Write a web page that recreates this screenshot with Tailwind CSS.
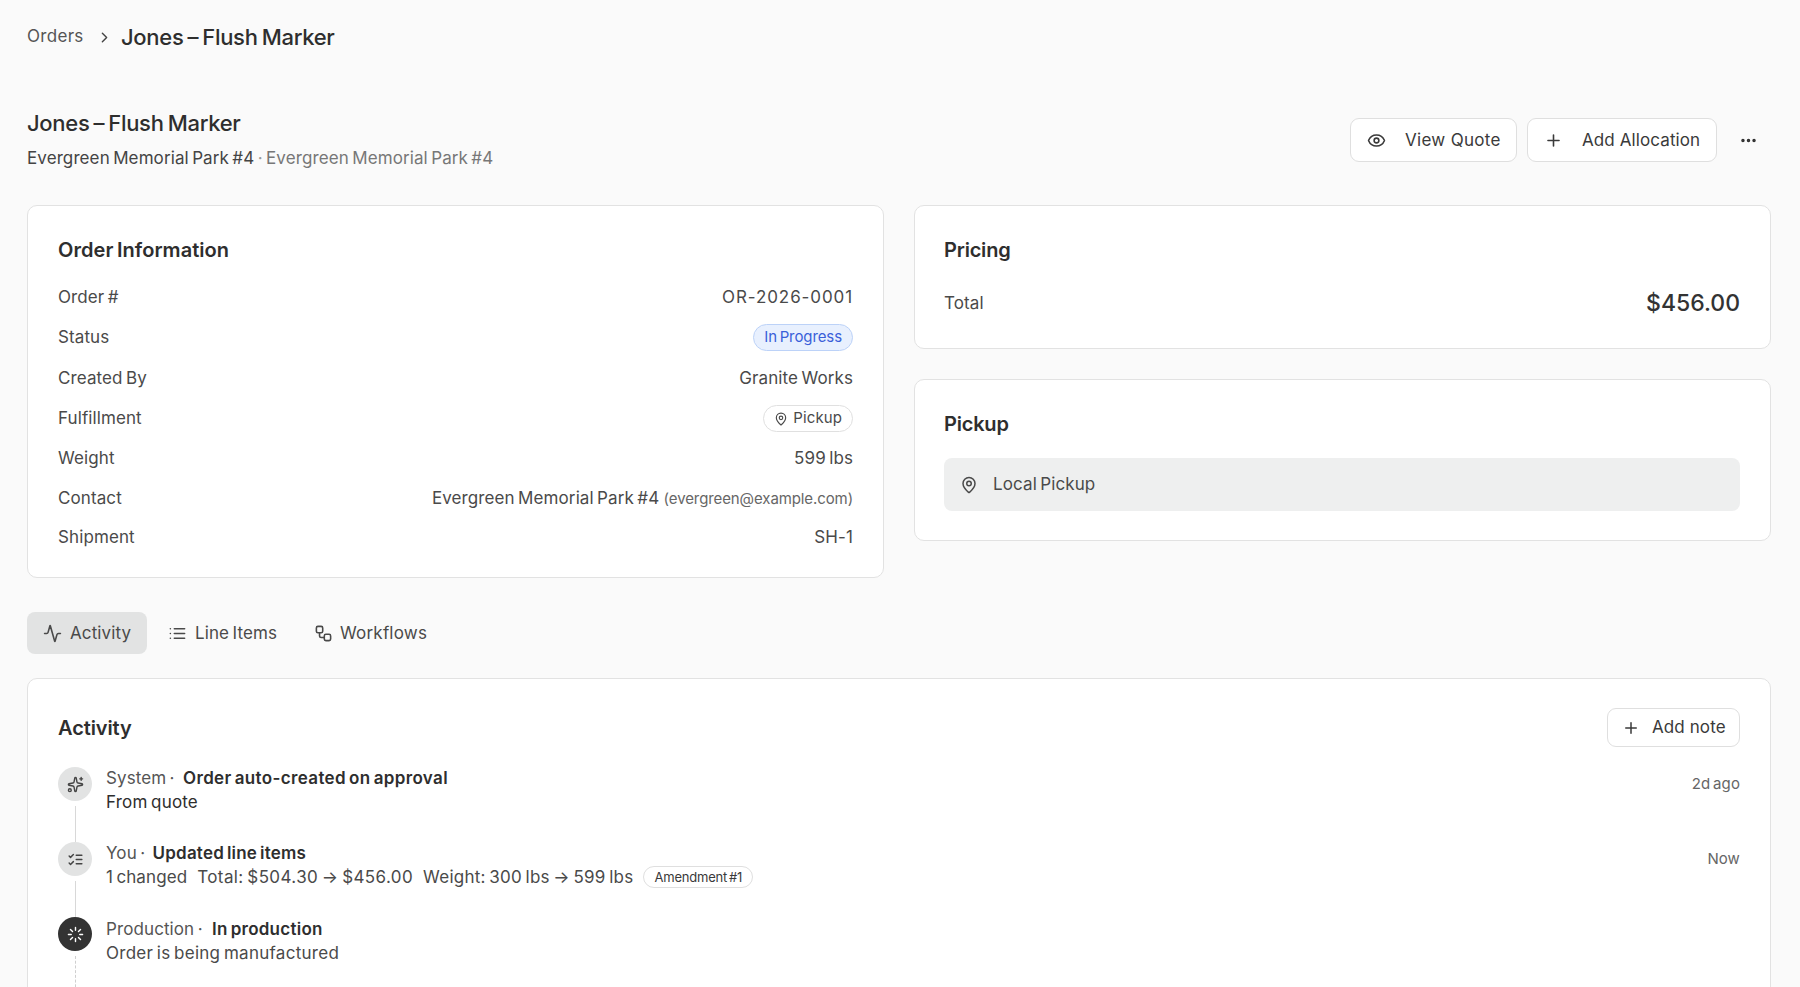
<!DOCTYPE html>
<html>
<head>
<meta charset="utf-8">
<script src="https://cdn.jsdelivr.net/npm/@tailwindcss/browser@4"></script>
</head>
<body class="bg-[#fafafa] text-[#2e2e2e] font-['Inter',sans-serif] text-[17px] tracking-[0.1px] [word-spacing:-1.5px]">
<div class="h-[987px] overflow-hidden px-[27px]">
  <nav class="flex items-center h-[74px]">
    <span class="text-[#555] text-[17px] w-[58px] tracking-[0.3px]">Orders</span>
    <svg class="ml-[11px] w-[17px] h-[17px] text-[#444]" viewBox="0 0 24 24" fill="none" stroke="currentColor" stroke-width="2" stroke-linecap="round" stroke-linejoin="round"><path d="m9 18 6-6-6-6"/></svg>
    <span class="ml-[8px] text-[22px] font-medium tracking-[-0.3px]">Jones – Flush Marker</span>
  </nav>
  <header class="flex justify-between items-start h-[131px] pt-[31px]">
    <div>
      <h1 class="text-[22px] font-medium leading-[36px] tracking-[-0.3px]">Jones – Flush Marker</h1>
      <p class="text-[17px] leading-[30px] mt-[2px] text-[#444]">Evergreen Memorial Park #4 <span class="text-[#999]">·</span> <span class="text-[#777]">Evergreen Memorial Park #4</span></p>
    </div>
    <div class="flex items-center mt-[13px]">
      <button class="h-[44px] w-[167px] flex items-center pl-[16px] bg-white border border-[#dfdfdf] rounded-[9px] text-[#3a3a3a]">
        <svg class="w-[19px] h-[19px]" viewBox="0 0 24 24" fill="none" stroke="currentColor" stroke-width="2" stroke-linecap="round" stroke-linejoin="round"><path d="M2.062 12.348a1 1 0 0 1 0-.696 10.75 10.75 0 0 1 19.876 0 1 1 0 0 1 0 .696 10.75 10.75 0 0 1-19.876 0"/><circle cx="12" cy="12" r="3"/></svg>
        <span class="ml-[19px] mt-[2px] tracking-[0.3px]">View Quote</span>
      </button>
      <button class="ml-[10px] h-[44px] w-[190px] flex items-center pl-[16px] bg-white border border-[#dfdfdf] rounded-[9px] text-[#3a3a3a]">
        <svg class="w-[19px] h-[19px]" viewBox="0 0 24 24" fill="none" stroke="currentColor" stroke-width="2" stroke-linecap="round" stroke-linejoin="round"><path d="M5 12h14M12 5v14"/></svg>
        <span class="ml-[19px] mt-[2px]">Add Allocation</span>
      </button>
      <button class="w-[44px] h-[44px] ml-[9px] flex items-center justify-center mr-[3px]">
        <svg class="w-[19px] h-[19px]" viewBox="0 0 24 24" fill="none" stroke="currentColor" stroke-width="2.4" stroke-linecap="round" stroke-linejoin="round"><circle cx="12" cy="12" r="1"/><circle cx="19" cy="12" r="1"/><circle cx="5" cy="12" r="1"/></svg>
      </button>
    </div>
  </header>

  <div class="grid grid-cols-2 gap-[30px] items-start w-[1744px]">
    <section class="bg-white border border-[#e2e2e2] rounded-[10px] h-[373px] pl-[30px] pr-[30px] pt-[28px]">
      <h2 class="text-[20px] font-semibold leading-[32px] h-[34px] tracking-[0.05px]">Order Information</h2>
      <div class="flex flex-col mt-[10px] text-[#4a4a4a]">
        <div class="flex justify-between items-center h-[40px]"><span>Order #</span><span class="tracking-[0.9px]">OR-2026-0001</span></div>
        <div class="flex justify-between items-center h-[40px]"><span>Status</span><span class="h-[27px] -mt-[1px] px-[10px] flex items-center rounded-full bg-[#e8f0fe] border border-[#bcd2f8] text-[#3a5fd9] text-[15px] tracking-[-0.1px]">In Progress</span></div>
        <div class="flex justify-between items-center h-[41px]"><span>Created By</span><span>Granite Works</span></div>
        <div class="flex justify-between items-center h-[40px]"><span>Fulfillment</span><span class="h-[27px] -mt-[1px] px-[10px] flex items-center gap-[5px] rounded-full bg-white border border-[#e0e0e0] text-[15px]"><svg class="w-[14px] h-[14px]" viewBox="0 0 24 24" fill="none" stroke="currentColor" stroke-width="2" stroke-linecap="round" stroke-linejoin="round"><path d="M20 10c0 4.993-5.539 10.193-7.399 11.799a1 1 0 0 1-1.202 0C9.539 20.193 4 14.993 4 10a8 8 0 0 1 16 0"/><circle cx="12" cy="10" r="3"/></svg>Pickup</span></div>
        <div class="flex justify-between items-center h-[40px]"><span>Weight</span><span>599 lbs</span></div>
        <div class="flex justify-between items-center h-[39px]"><span>Contact</span><span>Evergreen Memorial Park #4 <span class="text-[15px] text-[#666] ml-[1px] tracking-[-0.1px]">(evergreen@example.com)</span></span></div>
        <div class="flex justify-between items-center h-[39px]"><span>Shipment</span><span>SH-1</span></div>
      </div>
    </section>
    <div class="flex flex-col gap-[30px]">
      <section class="bg-white border border-[#e2e2e2] rounded-[10px] h-[144px] pl-[29px] pr-[30px] pt-[28px]">
        <h2 class="text-[20px] font-semibold leading-[32px] tracking-[-0.2px]">Pricing</h2>
        <div class="flex justify-between items-center mt-[21px] h-[34px] text-[#4a4a4a]"><span>Total</span><span class="text-[23px] font-medium text-[#333] tracking-normal -mt-[1px]">$456.00</span></div>
      </section>
      <section class="bg-white border border-[#e2e2e2] rounded-[10px] h-[162px] pl-[29px] pr-[30px] pt-[28px]">
        <h2 class="text-[20px] font-semibold leading-[32px] tracking-[-0.2px]">Pickup</h2>
        <div class="mt-[18px] h-[53px] rounded-[8px] bg-[#eeefef] flex items-center pl-[16px] text-[#4a4a4a]">
          <svg class="w-[18px] h-[18px]" viewBox="0 0 24 24" fill="none" stroke="currentColor" stroke-width="2" stroke-linecap="round" stroke-linejoin="round"><path d="M20 10c0 4.993-5.539 10.193-7.399 11.799a1 1 0 0 1-1.202 0C9.539 20.193 4 14.993 4 10a8 8 0 0 1 16 0"/><circle cx="12" cy="10" r="3"/></svg>
          <span class="ml-[15px] mt-[1px]">Local Pickup</span>
        </div>
      </section>
    </div>
  </div>

  <div class="flex items-center mt-[34px] h-[42px] text-[#4a4a4a]">
    <div class="w-[120px] h-full rounded-[8px] bg-[#e2e3e3] flex items-center pl-[16px] gap-[8px]">
      <svg class="w-[19px] h-[19px]" viewBox="0 0 24 24" fill="none" stroke="currentColor" stroke-width="2" stroke-linecap="round" stroke-linejoin="round"><path d="M22 12h-2.48a2 2 0 0 0-1.93 1.46l-2.35 8.36a.25.25 0 0 1-.48 0L9.24 2.18a.25.25 0 0 0-.48 0l-2.35 8.36A2 2 0 0 1 4.49 12H2"/></svg><span class="mt-[1px]">Activity</span></div>
    <div class="w-[147px] h-full flex items-center pl-[21px] gap-[8px]">
      <svg class="w-[19px] h-[19px]" viewBox="0 0 24 24" fill="none" stroke="currentColor" stroke-width="2" stroke-linecap="round" stroke-linejoin="round"><path d="M3 12h.01M3 18h.01M3 6h.01M8 12h13M8 18h13M8 6h13"/></svg><span class="mt-[1px]">Line Items</span></div>
    <div class="h-full flex items-center pl-[20px] gap-[7px]">
      <svg class="w-[19px] h-[19px]" viewBox="0 0 24 24" fill="none" stroke="currentColor" stroke-width="2" stroke-linecap="round" stroke-linejoin="round"><rect x="3" y="3" width="8" height="8" rx="2"/><path d="M7 11v4a2 2 0 0 0 2 2h4"/><rect x="13" y="13" width="8" height="8" rx="2"/></svg><span class="mt-[1px] tracking-[0.2px]">Workflows</span></div>
  </div>

  <section class="mt-[24px] w-[1744px] h-[400px] bg-white border border-[#e2e2e2] rounded-[10px] pl-[30px] pr-[30px] pt-[29px]">
    <div class="flex justify-between items-center h-[39px]">
      <h2 class="text-[20px] font-semibold tracking-[-0.1px] mt-[1px]">Activity</h2>
      <button class="w-[133px] h-[39px] flex items-center pl-[14px] bg-white border border-[#dfdfdf] rounded-[9px] text-[#3a3a3a]">
        <svg class="w-[18px] h-[18px]" viewBox="0 0 24 24" fill="none" stroke="currentColor" stroke-width="2" stroke-linecap="round" stroke-linejoin="round"><path d="M5 12h14M12 5v14"/></svg>
        <span class="ml-[12px] mt-[1px]">Add note</span>
      </button>
    </div>
    <div class="mt-[20px] flex flex-col">
      <div class="flex h-[75px]">
        <div class="w-[34px] flex flex-col items-center">
          <span class="w-[34px] h-[34px] shrink-0 rounded-full bg-[#e2e3e3] flex items-center justify-center text-[#444]"><svg class="w-[17px] h-[17px]" viewBox="0 0 24 24" fill="none" stroke="currentColor" stroke-width="2" stroke-linecap="round" stroke-linejoin="round"><path d="M11.017 2.814a1 1 0 0 1 1.966 0l1.051 5.558a2 2 0 0 0 1.594 1.594l5.558 1.051a1 1 0 0 1 0 1.966l-5.558 1.051a2 2 0 0 0-1.594 1.594l-1.051 5.558a1 1 0 0 1-1.966 0l-1.051-5.558a2 2 0 0 0-1.594-1.594l-5.558-1.051a1 1 0 0 1 0-1.966l5.558-1.051a2 2 0 0 0 1.594-1.594z"/><path d="M20 2v4M22 4h-4"/><circle cx="4" cy="20" r="2"/></svg></span>
          <span class="w-px flex-1 bg-[#d8d8d8] mt-[5px]"></span>
        </div>
        <div class="ml-[14px] flex-1 leading-[24px] -mt-[1px]">
          <p><span class="text-[#555]">System ·</span> <span class="ml-[5px] font-semibold tracking-[0.35px]">Order auto-created on approval</span></p>
          <p class="text-[#2e2e2e] tracking-[0.2px]">From quote</p>
        </div>
        <span class="text-[15px] text-[#666] mt-[6px]">2d ago</span>
      </div>
      <div class="flex h-[75px]">
        <div class="w-[34px] flex flex-col items-center">
          <span class="w-[34px] h-[34px] shrink-0 rounded-full bg-[#e2e3e3] flex items-center justify-center text-[#444]"><svg class="w-[17px] h-[17px]" viewBox="0 0 24 24" fill="none" stroke="currentColor" stroke-width="2" stroke-linecap="round" stroke-linejoin="round"><path d="m3 17 2 2 4-4M3 7l2 2 4-4M13 6h8M13 12h8M13 18h8"/></svg></span>
          <span class="w-px flex-1 bg-[#d8d8d8] mt-[5px]"></span>
        </div>
        <div class="ml-[14px] flex-1 leading-[24px] -mt-[1px]">
          <p><span class="text-[#555]">You ·</span> <span class="ml-[4px] font-semibold tracking-[0.2px]">Updated line items</span></p>
          <p class="flex items-center text-[#4a4a4a]"><span>1 changed</span><span class="ml-[10px] tracking-[0.4px]">Total: $504.30 → $456.00</span><span class="ml-[10px] tracking-[0.26px]">Weight: 300 lbs → 599 lbs</span><span class="ml-[10px] h-[22px] px-[10px] flex items-center rounded-full border border-[#dfdfdf] text-[13px] text-[#3a3a3a] tracking-[-0.2px]">Amendment #1</span></p>
        </div>
        <span class="text-[15px] text-[#666] mt-[6px]">Now</span>
      </div>
      <div class="flex h-[75px]">
        <div class="w-[34px] flex flex-col items-center">
          <span class="w-[34px] h-[34px] shrink-0 rounded-full bg-[#333] flex items-center justify-center text-white"><svg class="w-[17px] h-[17px]" viewBox="0 0 24 24" fill="none" stroke="currentColor" stroke-width="2" stroke-linecap="round" stroke-linejoin="round"><path d="M12 2v4M16.2 7.8l2.9-2.9M18 12h4M16.2 16.2l2.9 2.9M12 18v4M4.9 19.1l2.9-2.9M2 12h4M4.9 4.9l2.9 2.9"/></svg></span>
          <span class="w-0 flex-1 border-l border-dashed border-[#cfcfcf] mt-[5px]"></span>
        </div>
        <div class="ml-[14px] flex-1 leading-[24px]">
          <p><span class="text-[#555]">Production ·</span> <span class="ml-[6px] font-semibold tracking-[0.25px]">In production</span></p>
          <p class="text-[#4a4a4a] tracking-[0.28px]">Order is being manufactured</p>
        </div>
      </div>
    </div>
  </section>
</div>
</body>
</html>
